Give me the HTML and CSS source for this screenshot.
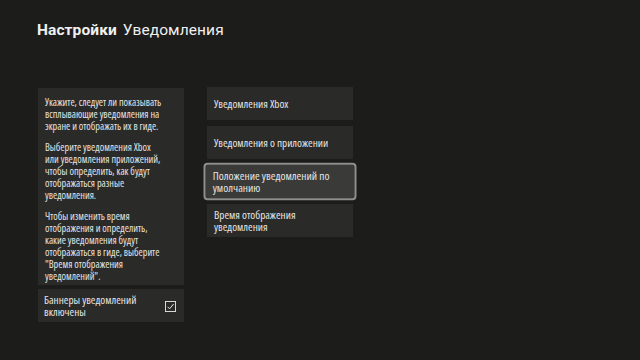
FILE: index.html
```html
<!DOCTYPE html>
<html lang="ru">
<head>
  <meta charset="UTF-8">
  <title>Настройки Уведомления</title>
  <link rel="stylesheet" href="styles.css">
</head>
<body>

  <div class="header">
    <h1><b>Настройки</b> Уведомления</h1>
  </div>

  <div class="main">
    <div class="left">
      <div class="info">
        <p>Укажите, следует ли показывать<br>всплывающие уведомления на<br>экране и отображать их в гиде.</p>
        <p>Выберите уведомления Xbox<br>или уведомления приложений,<br>чтобы определить, как будут<br>отображаться разные<br>уведомления.</p>
        <p>Чтобы изменить время<br>отображения и определить,<br>какие уведомления будут<br>отображаться в гиде, выберите<br>"Время отображения<br>уведомлений".</p>
      </div>
      <div class="toggle">
        <span>Баннеры уведомлений включены</span>
        <svg class="check" width="11" height="11" viewBox="0 0 11 11">
          <rect x="0.5" y="0.5" width="10" height="10" fill="none" stroke="#d8d8d6" stroke-width="1"/>
          <path d="M2.6 5.8 L4.6 7.8 L8.6 3" fill="none" stroke="#e8e8e6" stroke-width="1"/>
        </svg>
      </div>
    </div>

    <div class="menu">
      <div class="item">Уведомления Xbox</div>
      <div class="item">Уведомления о приложении</div>
      <div class="item selected">Положение уведомлений по умолчанию</div>
      <div class="item">Время отображения уведомления</div>
    </div>
  </div>

</body>
</html>
```

FILE: styles.css
```css
body {
  margin: 0;
  padding: 0;
  background: #1c1c1b;
  color: #e4e4e2;
  font-family: 'Open Sans', sans-serif;
  font-stretch: 75%;
  width: 640px;
  height: 360px;
  overflow: hidden;
}

.header {
  padding: 19px 0 0 37px;
}

h1 {
  margin: 0;
  font-family: Roboto, 'Noto Sans', sans-serif;
  font-stretch: 100%;
  font-size: 15.5px;
  line-height: 22px;
  font-weight: 400;
  color: #f0f0ee;
  letter-spacing: 0.1px;
}

h1 b {
  font-weight: 700;
  margin-right: 2px;
}

.main {
  display: flex;
  gap: 23px;
  padding: 46px 0 0 38px;
}

.left {
  width: 146px;
  display: flex;
  flex-direction: column;
  gap: 4px;
  margin-top: 1px;
}

.info {
  background: #2a2a29;
  padding: 8px 4px 3px 7px;
  font-size: 10.2px;
  line-height: 12px;
  white-space: nowrap;
}

.info p {
  margin: 0 0 9px;
}

.info p:last-child {
  margin-bottom: 0;
}

.toggle {
  background: #2a2a29;
  height: 33px;
  box-sizing: border-box;
  padding: 1px 8px 0 6px;
  display: flex;
  align-items: center;
  justify-content: space-between;
  font-size: 11.2px;
  line-height: 12px;
}

.toggle span {
  width: 112px;
}

.check {
  flex-shrink: 0;
  margin-top: 1px;
}

.menu {
  width: 146px;
  display: flex;
  flex-direction: column;
  gap: 6px;
}

.item {
  height: 33px;
  box-sizing: border-box;
  background: #2a2a29;
  padding: 1px 7px 0;
  display: flex;
  align-items: center;
  font-size: 11.2px;
  line-height: 12px;
}

.item.selected {
  background: #3a3a38;
  outline: 2px solid #8e8e8c;
  border-radius: 2px;
  transform: scale(1.02);
}
```
